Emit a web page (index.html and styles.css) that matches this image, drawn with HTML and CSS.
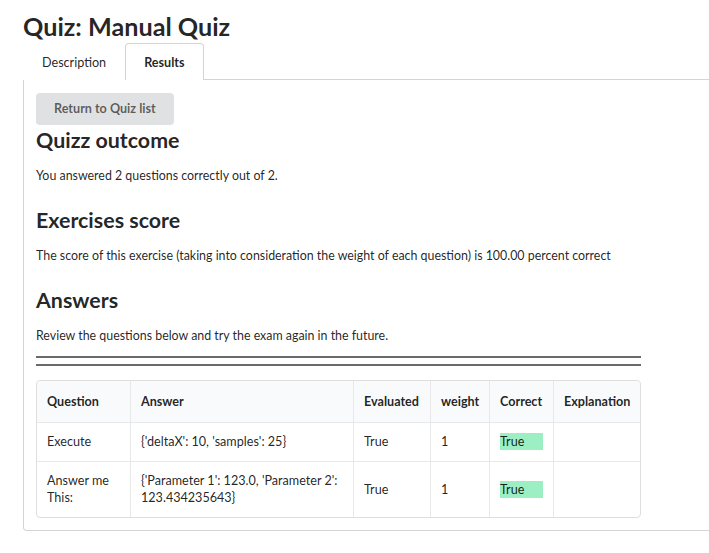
FILE: index.html
```html
<!DOCTYPE html>
<html lang="en">
<head>
    <meta charset="UTF-8">
    <title>Quiz: Manual Quiz</title>
    <link rel="stylesheet" href="styles.css">
</head>
<body>
<div class="page">
    <h1 class="title">Quiz: Manual Quiz</h1>

    <!--tabs-->
    <div class="tabs">
        <a class="tab">Description</a>
        <a class="tab active">Results</a>
    </div>

    <div class="panel">
        <div class="inner">
            <button type="button" class="btn">Return to Quiz list</button>

            <h2 class="head">Quizz outcome</h2>
            <p class="txt">You answered 2 questions correctly out of 2.</p>

            <h2 class="head">Exercises score</h2>
            <p class="txt">The score of this exercise (taking into consideration the weight of each question) is 100.00 percent correct</p>

            <h2 class="head">Answers</h2>
            <p class="txt">Review the questions below and try the exam again in the future.</p>

            <div class="dbl"></div>

            <table class="tbl">
                <thead>
                <tr>
                    <th class="c1">Question</th>
                    <th class="c2">Answer</th>
                    <th class="c3">Evaluated</th>
                    <th class="c4">weight</th>
                    <th class="c5">Correct</th>
                    <th class="c6">Explanation</th>
                </tr>
                </thead>
                <tbody>
                <tr>
                    <td>Execute</td>
                    <td>{'deltaX': 10, 'samples': 25}</td>
                    <td>True</td>
                    <td>1</td>
                    <td><span class="ok">True</span></td>
                    <td></td>
                </tr>
                <tr>
                    <td>Answer me This:</td>
                    <td>{'Parameter 1': 123.0, 'Parameter 2': 123.434235643}</td>
                    <td>True</td>
                    <td>1</td>
                    <td><span class="ok">True</span></td>
                    <td></td>
                </tr>
                </tbody>
            </table>
        </div>
    </div>
</div>
</body>
</html>
```

FILE: styles.css
```css
html, body {
    margin: 0;
    overflow: hidden;
    background: #fff;
}

body {
    font-family: Lato, "Open Sans", sans-serif;
    color: rgba(0, 0, 0, .87);
}

.page {
    padding: 10px 0 0 23px;
}

.title {
    margin: 0;
    font-size: 25.2px;
    line-height: 33px;
    font-weight: 700;
}

/*tab bar*/
.tabs {
    display: flex;
    width: 700px;
    border-bottom: 1px solid #d4d4d5;
}

.tab {
    display: block;
    padding: 11px 18px 9px;
    font-size: 12.6px;
    line-height: 16px;
    border: 1px solid transparent;
    border-bottom: none;
    border-radius: 4px 4px 0 0;
    margin-bottom: -1px;
    background: #fff;
}

.tab.active {
    border-color: #d4d4d5;
    font-weight: 700;
}

/*content box*/
.panel {
    width: 700px;
    border: 1px solid #d4d4d5;
    border-top: none;
    border-radius: 0 0 4px 4px;
    padding: 12px;
}

.inner {
    width: 605px;
}

.btn {
    display: block;
    border: none;
    border-radius: 4px;
    background: #e0e1e2;
    color: rgba(0, 0, 0, .6);
    font-family: inherit;
    font-size: 12.6px;
    font-weight: 700;
    line-height: 14px;
    padding: 9px 18px;
    margin-top: 1px;
}

.head {
    margin: 3px 0 0;
    font-size: 21.4px;
    line-height: 24px;
    font-weight: 700;
}

.txt + .head {
    margin-top: 24px;
}

.txt {
    margin: 16px 0 0;
    font-size: 12.4px;
    line-height: 16px;
}

/*double line*/
.dbl {
    margin-top: 12px;
    height: 6px;
    border-top: 2px solid #6a6a6a;
    border-bottom: 2px solid #6a6a6a;
}

.tbl {
    margin-top: 14px;
    width: 605px;
    table-layout: fixed;
    border-collapse: separate;
    border-spacing: 0;
    border: 1px solid #dededf;
    border-radius: 4px;
    font-size: 12.6px;
    line-height: 17px;
}

.tbl th, .tbl td {
    box-sizing: border-box;
    text-align: left;
    vertical-align: middle;
    padding: 10px 11px 11px 10px;
    border-left: 1px solid #e8e8e9;
    border-top: 1px solid #e8e8e9;
}

.tbl th {
    background: #f9fafb;
    font-weight: 700;
    padding: 12px 11px 12px 10px;
    border-top: none;
}

.tbl th:first-child, .tbl td:first-child {
    border-left: none;
}

.tbl thead tr th:first-child {
    border-top-left-radius: 4px;
}

.tbl thead tr th:last-child {
    border-top-right-radius: 4px;
}

.c1 { width: 93px; }
.c2 { width: 223px; }
.c3 { width: 77px; }
.c4 { width: 59px; }
.c5 { width: 64px; }
.c6 { width: 87px; }

.ok {
    display: inline-block;
    width: 43px;
    line-height: 17px;
    background: #9cefc3;
}
```
